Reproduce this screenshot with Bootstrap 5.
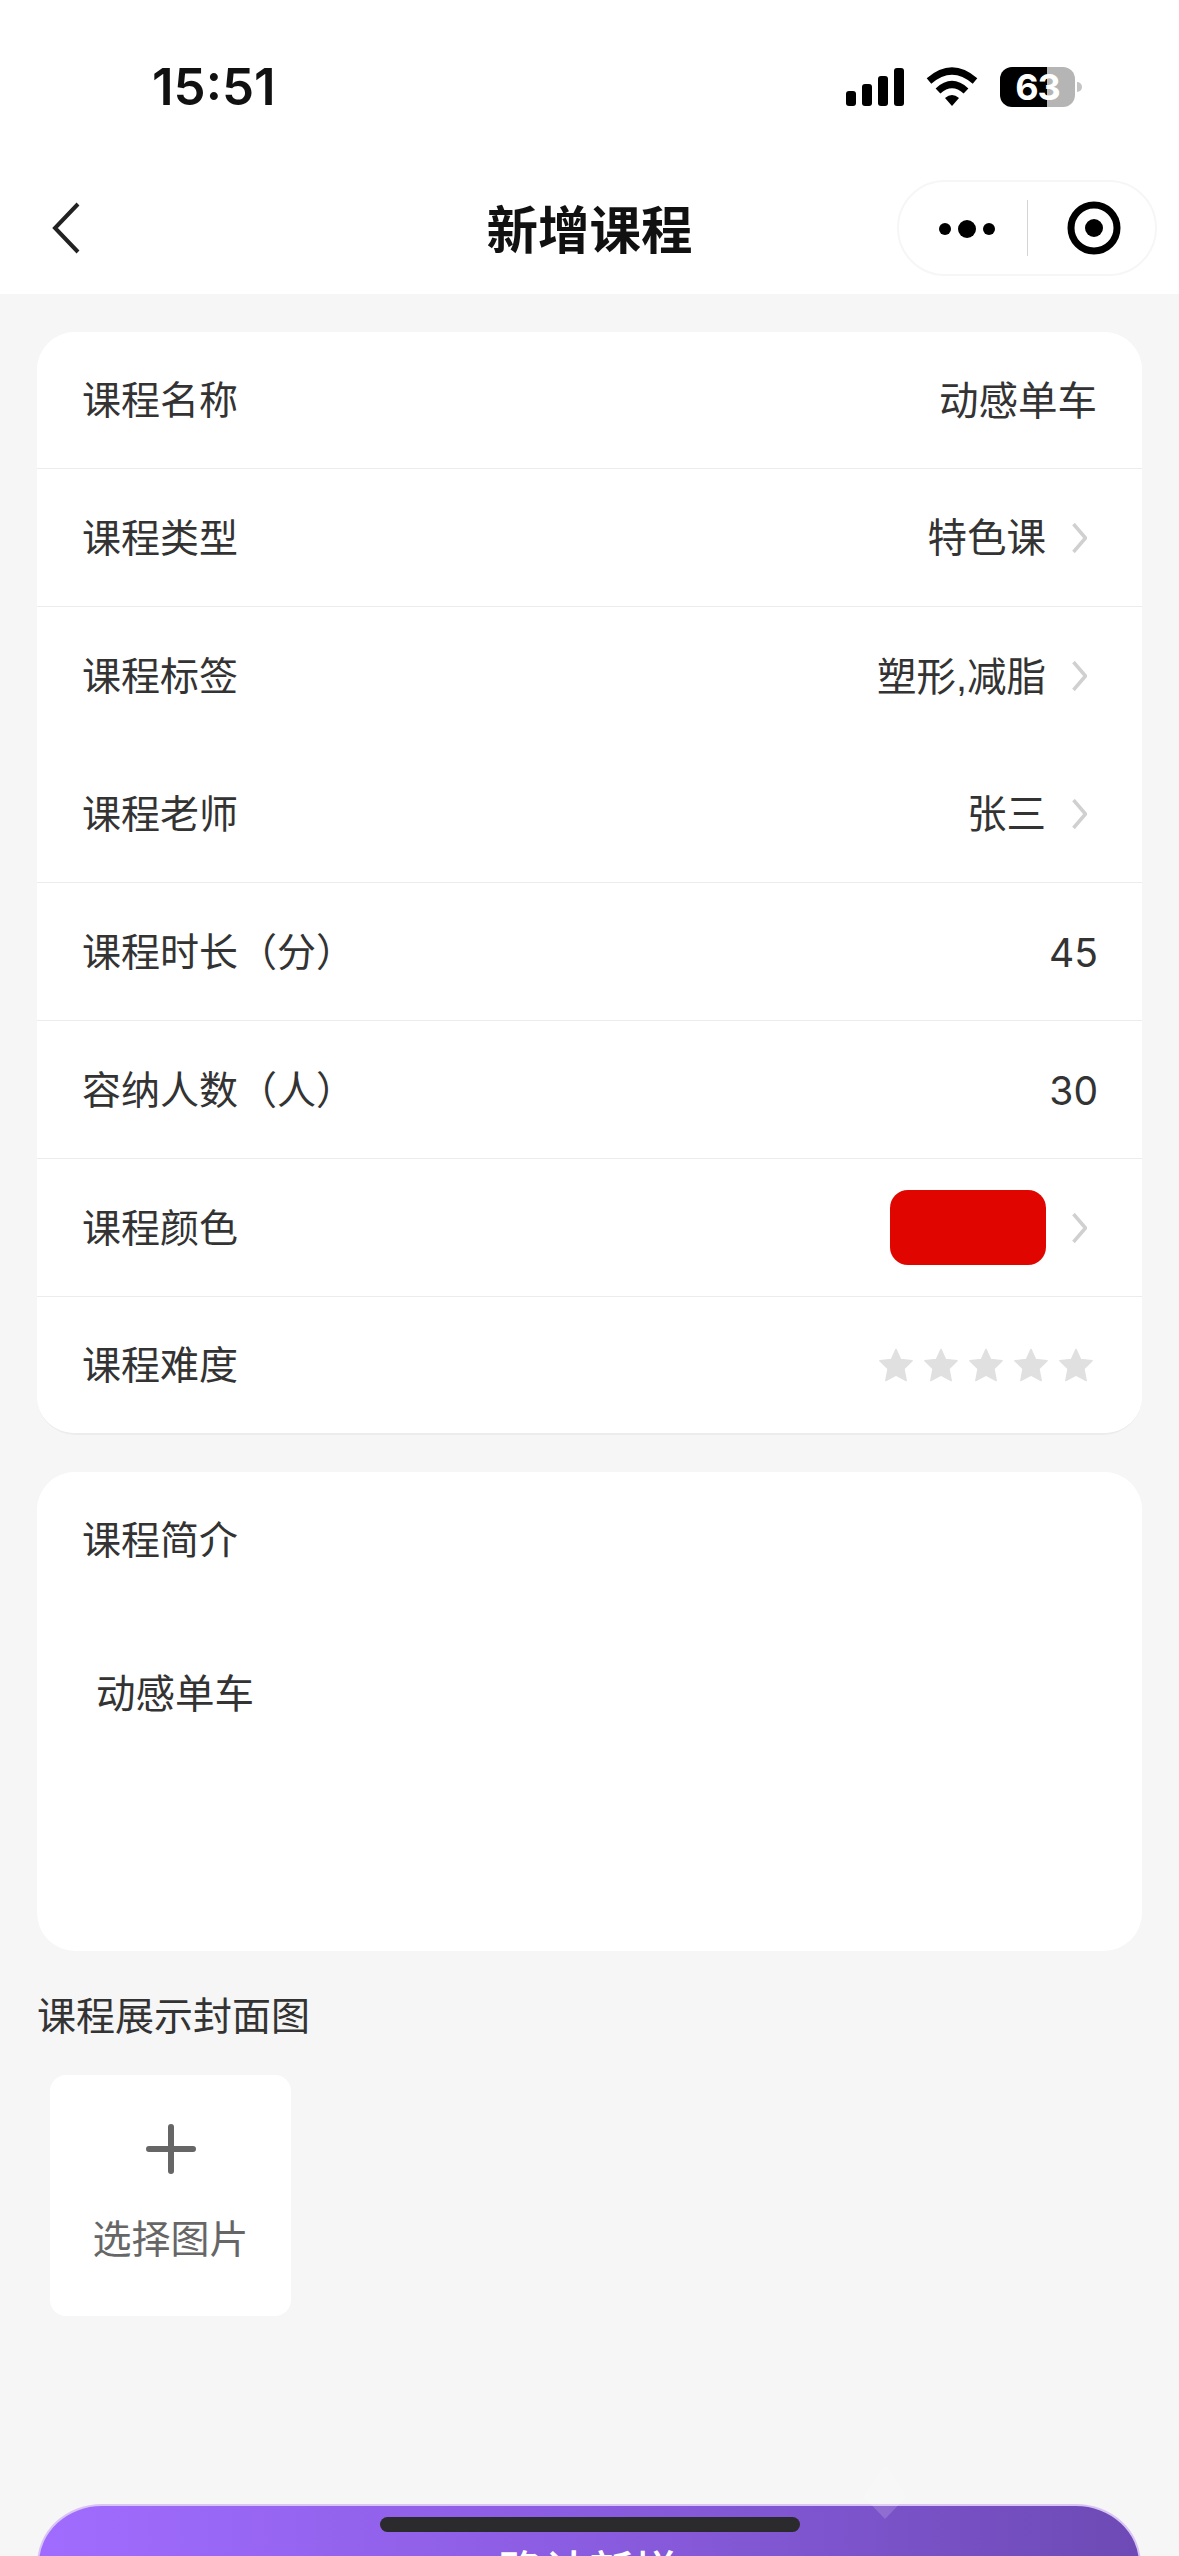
<!DOCTYPE html>
<html lang="zh-CN">

<head>
    <meta charset="UTF-8">
    <meta name="viewport" content="width=device-width, initial-scale=1.0">
    <title>新增课程</title>
    <link href="https://cdn.jsdelivr.net/npm/bootstrap@5.3.0/dist/css/bootstrap.min.css" rel="stylesheet">
    <style>
        html, body {
            height: 2556px;
            overflow: hidden;
        }

        body {
            background: #f6f6f6;
            color: #333;
            font-family: "Liberation Sans", "Noto Sans CJK SC", sans-serif;
            font-size: 39px;
            position: relative;
        }

        .status-bar {
            height: 162px;
            padding: 67px 104px 0 152px;
            background: #fff;
        }

        .status-time {
            font-family: Inter, "Liberation Sans", sans-serif;
            font-size: 51px;
            font-weight: 600;
            line-height: 40px;
            color: #111;
        }

        .wifi-icon {
            margin-left: 22px;
        }

        .battery-box {
            position: relative;
            width: 75px;
            height: 40px;
            border-radius: 12px;
            background: linear-gradient(90deg, #000 63%, #b5b5b5 63%);
            color: #fff;
            font-family: Inter, "Liberation Sans", sans-serif;
            font-size: 36px;
            font-weight: 700;
            line-height: 40px;
            letter-spacing: -1px;
            text-align: center;
            margin-left: 22px;
        }

        .battery-nub {
            position: absolute;
            left: 77px;
            top: 15px;
            width: 5px;
            height: 10px;
            border-radius: 0 5px 5px 0;
            background: #c4c4c4;
        }

        .wx-nav {
            height: 132px;
            background: #fff;
            padding: 0 22px 0 52px;
            position: relative;
        }

        .wx-title {
            position: absolute;
            left: 0;
            right: 0;
            top: 3px;
            line-height: 132px;
            text-align: center;
            font-size: 51.5px;
            font-weight: 700;
            color: #111;
        }

        .wx-capsule {
            position: relative;
            width: 260px;
            height: 96px;
            border: 2px solid #f6f6f6;
            border-radius: 48px;
            background: #fff;
        }

        .form-panel {
            margin: 0 37px;
            border: 0;
            border-radius: 38px;
            overflow: hidden;
            color: #333;
        }

        .form-panel-first {
            margin-top: 38px;
            border-bottom: 2px solid #ececec;
        }

        .form-panel-second {
            margin-top: 37px;
            height: 479px;
        }

        .form-line {
            height: 138px;
            padding: 3px 45px 0;
            border-width: 0 0 2px;
            border-color: #ececec;
            color: #333;
            font-size: 39px;
        }

        .form-line-open {
            border-bottom: 0;
        }

        .form-line-short {
            height: 137px;
        }

        .form-line-last {
            height: 136px;
            border-bottom: 0;
        }

        .form-line-head {
            padding-top: 0;
        }

        .value-text {
            font-size: 39.5px;
        }

        .row-arrow {
            width: 15px;
            height: 30px;
            margin: -3px 10px 0 26px;
        }

        .value-num {
            font-family: Inter, "Noto Sans", sans-serif;
            font-size: 39px;
            margin-right: -1px;
        }

        .color-swatch {
            width: 156px;
            height: 75px;
            margin-top: -3px;
            border-radius: 18px;
            background: #e10500;
        }

        .star-row {
            gap: 11px;
            margin: -3px 4px 0 0;
        }

        .star-row svg {
            width: 34px;
            height: 34px;
        }

        .intro-text {
            padding: 59px 59px;
            line-height: 50px;
            font-size: 39.5px;
        }

        .cover-title {
            margin: 41px 0 0 37px;
            line-height: 50px;
        }

        .cover-picker {
            width: 241px;
            height: 241px;
            margin: 33px 0 0 50px;
            padding-top: 49px;
            background: #fff;
            border-radius: 16px;
            color: #666;
            font-size: 39px;
        }

        .cover-picker svg {
            width: 50px;
            height: 50px;
            margin-bottom: 41px;
        }

        .cover-picker span {
            line-height: 50px;
        }

        .save-btn {
            position: absolute;
            left: 37px;
            width: 1104px;
            top: 2504px;
            height: 130px;
            padding: 10px 0 0;
            border: 2px solid #d9c4f5;
            border-radius: 65px / 60px;
            background: linear-gradient(90deg, #a06cff 0%, #8a5ce0 50%, #6d4ab5 100%);
            color: #fff;
            font-size: 45px;
            font-weight: 500;
            line-height: 60px;
            text-align: center;
        }

        .home-bar {
            position: absolute;
            left: 380px;
            top: 2517px;
            width: 420px;
            height: 15px;
            border-radius: 8px;
            background: #2b2b2e;
        }

        .water-drop {
            position: absolute;
            left: 864px;
            top: 2465px;
            width: 42px;
            height: 54px;
        }
    </style>
</head>

<body>
    <div class="status-bar d-flex justify-content-between align-items-start">
        <span class="status-time">15:51</span>
        <div class="d-flex align-items-center">
            <svg width="58" height="40" viewBox="0 0 58 40">
                <rect x="0" y="24" width="10" height="15" rx="3" fill="#000"></rect>
                <rect x="16" y="17" width="10" height="22" rx="3" fill="#000"></rect>
                <rect x="32" y="9" width="10" height="30" rx="3" fill="#000"></rect>
                <rect x="48" y="1" width="10" height="38" rx="3" fill="#000"></rect>
            </svg>
            <svg class="wifi-icon" width="52" height="40" viewBox="0 0 52 40">
                <path d="M3 14 Q26 -6 49 14" fill="none" stroke="#000" stroke-width="7"></path>
                <path d="M12 24 Q26 11 40 24" fill="none" stroke="#000" stroke-width="7"></path>
                <path d="M19 31 Q26 25 33 31 L26 39 Z" fill="#000"></path>
            </svg>
            <div class="battery-box">63<span class="battery-nub"></span></div>
        </div>
    </div>

    <nav class="wx-nav d-flex justify-content-between align-items-center">
        <svg class="position-relative" width="28" height="52" viewBox="0 0 28 52">
            <path d="M26 2 L3 26 L26 50" fill="none" stroke="#222" stroke-width="4"></path>
        </svg>
        <div class="wx-title">新增课程</div>
        <div class="wx-capsule d-flex align-items-center">
            <svg width="256" height="92" viewBox="0 0 256 92">
                <circle cx="46" cy="47" r="6" fill="#000"></circle>
                <circle cx="68" cy="47" r="9" fill="#000"></circle>
                <circle cx="90" cy="47" r="6" fill="#000"></circle>
                <rect x="128" y="18" width="1" height="56" fill="#d4d4d4"></rect>
                <circle cx="195" cy="46" r="23" fill="none" stroke="#000" stroke-width="7"></circle>
                <circle cx="195" cy="46" r="9" fill="#000"></circle>
            </svg>
        </div>
    </nav>

    <div class="card form-panel form-panel-first">
        <div class="list-group list-group-flush">
            <div class="list-group-item form-line form-line-short d-flex justify-content-between align-items-center">
                <span>课程名称</span><span class="value-text">动感单车</span>
            </div>
            <div class="list-group-item form-line d-flex justify-content-between align-items-center">
                <span>课程类型</span>
                <div class="d-flex align-items-center">
                    <span class="value-text">特色课</span>
                    <svg class="row-arrow" viewBox="0 0 15 30"><path d="M1.5 1 L13.5 15 L1.5 29" fill="none" stroke="#d0d0d0" stroke-width="3.5"></path></svg>
                </div>
            </div>
            <div class="list-group-item form-line form-line-open d-flex justify-content-between align-items-center">
                <span>课程标签</span>
                <div class="d-flex align-items-center">
                    <span class="value-text">塑形,减脂</span>
                    <svg class="row-arrow" viewBox="0 0 15 30"><path d="M1.5 1 L13.5 15 L1.5 29" fill="none" stroke="#d0d0d0" stroke-width="3.5"></path></svg>
                </div>
            </div>
            <div class="list-group-item form-line d-flex justify-content-between align-items-center">
                <span>课程老师</span>
                <div class="d-flex align-items-center">
                    <span class="value-text">张三</span>
                    <svg class="row-arrow" viewBox="0 0 15 30"><path d="M1.5 1 L13.5 15 L1.5 29" fill="none" stroke="#d0d0d0" stroke-width="3.5"></path></svg>
                </div>
            </div>
            <div class="list-group-item form-line d-flex justify-content-between align-items-center">
                <span>课程时长（分）</span><span class="value-num">45</span>
            </div>
            <div class="list-group-item form-line d-flex justify-content-between align-items-center">
                <span>容纳人数（人）</span><span class="value-num">30</span>
            </div>
            <div class="list-group-item form-line d-flex justify-content-between align-items-center">
                <span>课程颜色</span>
                <div class="d-flex align-items-center">
                    <span class="color-swatch"></span>
                    <svg class="row-arrow" viewBox="0 0 15 30"><path d="M1.5 1 L13.5 15 L1.5 29" fill="none" stroke="#d0d0d0" stroke-width="3.5"></path></svg>
                </div>
            </div>
            <div class="list-group-item form-line form-line-last d-flex justify-content-between align-items-center">
                <span>课程难度</span>
                <div class="star-row d-flex">
                    <svg viewBox="0 0 24 24"><path d="M12 1 L15.2 8 L23.4 9 L17.6 14.6 L19.2 23 L12 19.2 L4.8 23 L6.4 14.6 L0.6 9 L8.8 8 Z" fill="#e0e0e0" stroke="#e0e0e0" stroke-width="1" stroke-linejoin="round"></path></svg>
                    <svg viewBox="0 0 24 24"><path d="M12 1 L15.2 8 L23.4 9 L17.6 14.6 L19.2 23 L12 19.2 L4.8 23 L6.4 14.6 L0.6 9 L8.8 8 Z" fill="#e0e0e0" stroke="#e0e0e0" stroke-width="1" stroke-linejoin="round"></path></svg>
                    <svg viewBox="0 0 24 24"><path d="M12 1 L15.2 8 L23.4 9 L17.6 14.6 L19.2 23 L12 19.2 L4.8 23 L6.4 14.6 L0.6 9 L8.8 8 Z" fill="#e0e0e0" stroke="#e0e0e0" stroke-width="1" stroke-linejoin="round"></path></svg>
                    <svg viewBox="0 0 24 24"><path d="M12 1 L15.2 8 L23.4 9 L17.6 14.6 L19.2 23 L12 19.2 L4.8 23 L6.4 14.6 L0.6 9 L8.8 8 Z" fill="#e0e0e0" stroke="#e0e0e0" stroke-width="1" stroke-linejoin="round"></path></svg>
                    <svg viewBox="0 0 24 24"><path d="M12 1 L15.2 8 L23.4 9 L17.6 14.6 L19.2 23 L12 19.2 L4.8 23 L6.4 14.6 L0.6 9 L8.8 8 Z" fill="#e0e0e0" stroke="#e0e0e0" stroke-width="1" stroke-linejoin="round"></path></svg>
                </div>
            </div>
        </div>
    </div>

    <div class="card form-panel form-panel-second">
        <div class="list-group list-group-flush">
            <div class="list-group-item form-line form-line-head d-flex align-items-center">
                <span>课程简介</span>
            </div>
        </div>
        <div class="intro-text">动感单车</div>
    </div>

    <div class="cover-title">课程展示封面图</div>
    <div class="cover-picker d-flex flex-column align-items-center">
        <svg viewBox="0 0 50 50">
            <path d="M25 3 V47 M3 25 H47" fill="none" stroke="#666" stroke-width="6" stroke-linecap="round"></path>
        </svg>
        <span>选择图片</span>
    </div>

    <button class="btn save-btn" type="button">确认新增</button>
    <svg class="water-drop" viewBox="0 0 42 54">
        <path d="M21 0 Q40 26 42 32 L21 54 L0 32 Q2 26 21 0 Z" fill="#fff" opacity="0.16"></path>
    </svg>
    <div class="home-bar"></div>

    <script src="https://cdn.jsdelivr.net/npm/bootstrap@5.3.0/dist/js/bootstrap.bundle.min.js"></script>
</body>
</html>
